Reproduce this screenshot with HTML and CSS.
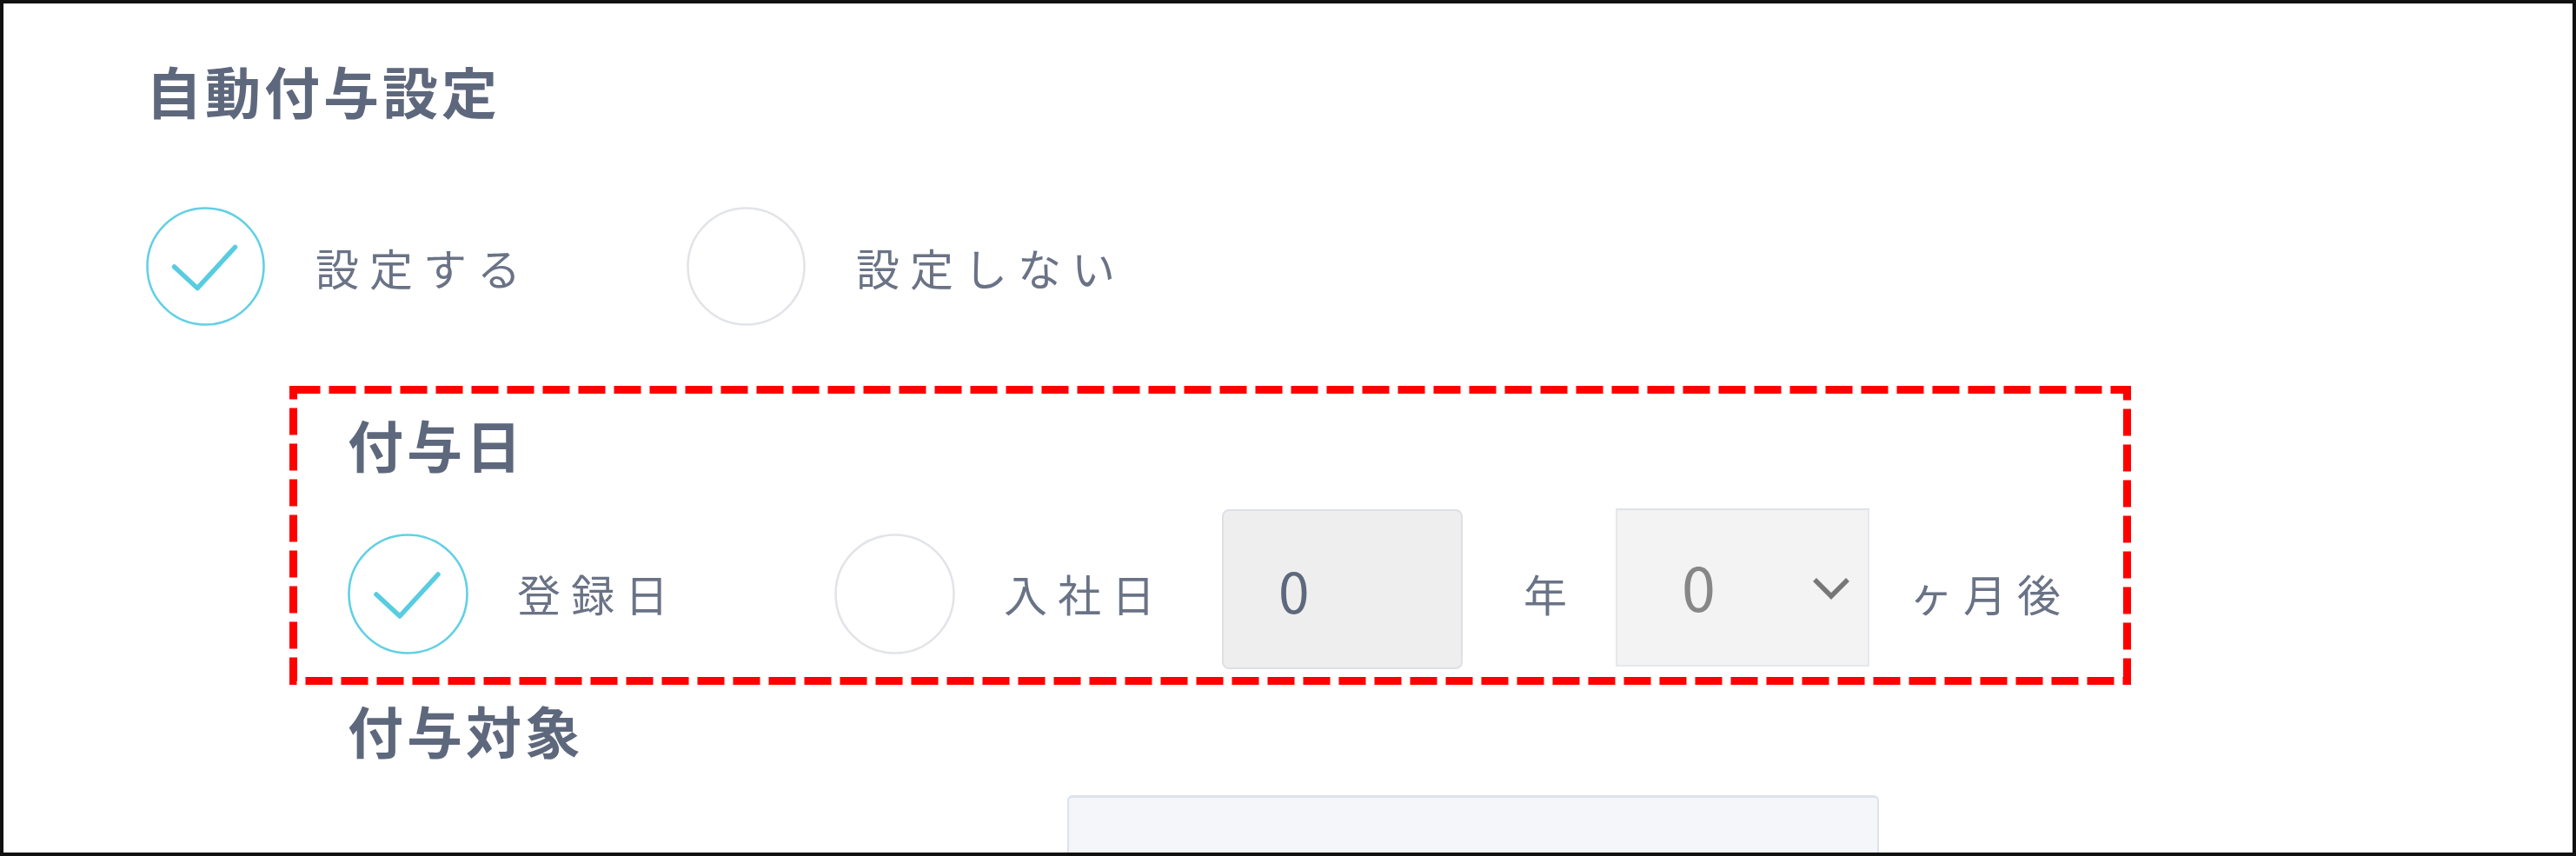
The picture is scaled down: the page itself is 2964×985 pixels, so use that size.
FILE: index.html
```html
<!DOCTYPE html>
<html lang="ja">
<head>
<meta charset="utf-8">
<title>自動付与設定</title>
<link rel="stylesheet" href="styles.css">
</head>
<body>
<div class="frame">
  <h1 class="title">自動付与設定</h1>
  <div class="options row1">
    <div class="opt">
      <span class="radio on">
        <svg viewBox="0 0 139 139" width="137" height="137"><circle cx="69.5" cy="69.5" r="68" fill="none" stroke="#62d0e3" stroke-width="2.6"/><polyline points="33,70 60,95 104,47" fill="none" stroke="#58cce0" stroke-width="5.5" stroke-linecap="round" stroke-linejoin="round"/></svg>
      </span>
      <span class="lbl">設定する</span>
    </div>
    <div class="opt">
      <span class="radio">
        <svg viewBox="0 0 139 139" width="137" height="137"><circle cx="69.5" cy="69.5" r="68" fill="none" stroke="#e2e4e8" stroke-width="2.6"/></svg>
      </span>
      <span class="lbl">設定しない</span>
    </div>
  </div>

  <section class="grant">
    <svg class="dash" width="2119" height="344" viewBox="0 0 2119 344"><rect x="4.5" y="4.5" width="2110" height="335" fill="none" stroke="#ff0000" stroke-width="9" stroke-dasharray="31 10"/></svg>
    <h2 class="sub">付与日</h2>
    <div class="options row2">
      <div class="opt">
        <span class="radio big on">
          <svg viewBox="0 0 139 139" width="139" height="139"><circle cx="69.5" cy="69.5" r="68" fill="none" stroke="#62d0e3" stroke-width="2.6"/><polyline points="33,70 60,95 104,47" fill="none" stroke="#58cce0" stroke-width="5.5" stroke-linecap="round" stroke-linejoin="round"/></svg>
        </span>
        <span class="lbl">登録日</span>
      </div>
      <div class="opt last">
        <span class="radio big">
          <svg viewBox="0 0 139 139" width="139" height="139"><circle cx="69.5" cy="69.5" r="68" fill="none" stroke="#e2e4e8" stroke-width="2.6"/></svg>
        </span>
        <span class="lbl">入社日</span>
      </div>
      <div class="num-input">0</div>
      <span class="lbl unit-year">年</span>
      <div class="num-select">
        <span class="sel-val">0</span>
        <svg class="chev" width="46" height="28" viewBox="0 0 46 28"><polyline points="4,4 23,23 42,4" fill="none" stroke="#777777" stroke-width="5.5"/></svg>
      </div>
      <span class="lbl unit-month">ヶ月後</span>
    </div>
  </section>

  <h2 class="sub target">付与対象</h2>
  <div class="target-box"></div>
</div>
</body>
</html>
```

FILE: styles.css
```css
html, body {
  margin: 0;
  padding: 0;
  background: #ffffff;
}

.frame {
  box-sizing: border-box;
  width: 2964px;
  height: 985px;
  border: 4px solid #111111;
  padding: 64px 0 0 164px;
  overflow: hidden;
  background: #ffffff;
  font-family: "Noto Sans CJK JP", "Noto Sans", sans-serif;
}

.title,
.sub {
  margin: 0;
  font-size: 64px;
  font-weight: 700;
  line-height: 70px;
  letter-spacing: 4px;
  color: #5e687d;
}

.options {
  display: flex;
  align-items: center;
}

.row1 {
  margin-top: 100px;
  height: 137px;
}

.opt {
  display: flex;
  align-items: center;
  margin-right: 179px;
}

.opt.last {
  margin-right: 0;
}

.radio {
  flex: none;
  width: 137px;
  height: 137px;
}

.radio svg {
  display: block;
}

.radio.big {
  width: 139px;
  height: 139px;
  margin-top: 10px;
}

.lbl {
  margin-left: 58px;
  font-size: 50px;
  line-height: 1;
  letter-spacing: 12px;
  color: #6a7386;
  white-space: nowrap;
}

.row2 .lbl {
  margin-left: 56px;
  margin-top: 8px;
}

.grant {
  position: relative;
  box-sizing: border-box;
  width: 2119px;
  height: 344px;
  margin: 69px 0 0 165px;
  padding: 31px 0 0 67px;
}

.dash {
  position: absolute;
  left: 0;
  top: 0;
  display: block;
}

.row2 {
  margin-top: 41px;
  height: 184px;
}

.num-input {
  box-sizing: border-box;
  flex: none;
  width: 277px;
  height: 184px;
  margin-left: 65px;
  padding-left: 63px;
  display: flex;
  align-items: center;
  background: #eeeeee;
  border: 2px solid #dde0e6;
  border-radius: 8px;
  font-size: 64px;
  color: #5e687d;
}

.row2 .unit-year {
  margin-left: 70px;
}

.num-select {
  box-sizing: border-box;
  flex: none;
  width: 292px;
  height: 182px;
  margin-left: 44px;
  margin-top: -4px;
  padding: 0 19px 0 74px;
  display: flex;
  align-items: center;
  justify-content: space-between;
  background: #f3f3f3;
  border: 2px solid #e5e8ec;
  border-top-color: #dfe2e6;
  font-size: 70px;
  color: #878787;
}

.sel-val {
  line-height: 1;
  margin-top: -4px;
}

.chev {
  display: block;
  margin-top: 2px;
}

.row2 .unit-month {
  margin-left: 46px;
}

.target {
  margin: 16px 0 0 232px;
}

.target-box {
  box-sizing: border-box;
  width: 934px;
  height: 140px;
  margin: 41px 0 0 1060px;
  background: #f5f6fa;
  border: 2px solid #dde2ec;
  border-top-width: 3px;
  border-radius: 6px;
}
```
